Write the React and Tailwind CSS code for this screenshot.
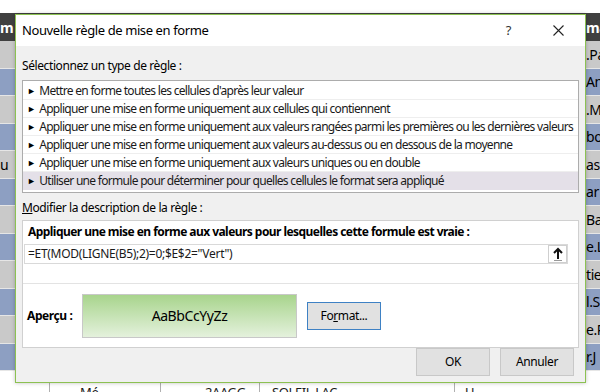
import React from 'react';

const rules = [
  "Mettre en forme toutes les cellules d'après leur valeur",
  'Appliquer une mise en forme uniquement aux cellules qui contiennent',
  'Appliquer une mise en forme uniquement aux valeurs rangées parmi les premières ou les dernières valeurs',
  'Appliquer une mise en forme uniquement aux valeurs au-dessus ou en dessous de la moyenne',
  'Appliquer une mise en forme uniquement aux valeurs uniques ou en double',
  'Utiliser une formule pour déterminer pour quelles cellules le format sera appliqué',
];

const rightLabels = ['.Pa', 'An', '.M', 'bo', 'as', 'ar', 'Ba', 'e.L', 'tie', 'l.S', 'e.P', 'r.J'];
const leftLabels = ['', '', '', '', 'u', '', '', '', '', '', '', ''];

function SheetRow({ i, left, right }) {
  const bg = i % 2 === 0 ? 'bg-[#c9c9c9]' : 'bg-[#8d9fc2]';
  return (
    <div className={`flex h-[27.5px] border-b border-[#e6e6e6] ${bg}`}>
      <div className="w-[15px] flex items-center text-[14px] text-black">{left}</div>
      <div className="flex-1" />
      <div className="w-[14px] flex items-center text-[14px] text-black overflow-hidden whitespace-nowrap">{right}</div>
    </div>
  );
}

export default function App() {
  return (
    <div className="relative w-[600px] h-[392px] overflow-hidden bg-white font-['Noto_Sans',sans-serif] text-[12px] tracking-[-0.4px] text-[#1a1a1a]">
      {/* spreadsheet behind the dialog */}
      <div className="pt-[13px]">
        <div className="flex h-[28px] bg-[#404040] text-white text-[14px] font-bold">
          <div className="w-[15px] flex items-center">m</div>
          <div className="flex-1" />
          <div className="w-[14px] flex items-center overflow-hidden">ma</div>
        </div>
        {rightLabels.map((r, i) => (
          <SheetRow key={i} i={i} left={leftLabels[i]} right={r} />
        ))}
        <div className="flex h-[22px] bg-white text-[13px]">
          <div className="w-[50px] border-r border-[#b0b0b0]" />
          <div className="w-[111px] border-r border-[#b0b0b0] pl-[30px] pt-[12px]">Mé</div>
          <div className="w-[99px] border-r border-[#b0b0b0] pl-[44px] pt-[12px]">2AAGG</div>
          <div className="w-[195px] border-r border-[#b0b0b0] pl-[12px] pt-[12px]">SOLEIL LAC</div>
          <div className="flex-1 pl-[10px] pt-[12px]">U</div>
        </div>
      </div>

      {/* dialog window */}
      <div className="absolute left-[15px] top-[14px] w-[571px] h-[369px] border border-[#8cc152] bg-[#f0f0f0] shadow-[0_0_4px_rgba(0,0,0,0.25)] flex flex-col">
        <div className="h-[31px] bg-white flex items-center pl-[6px] shrink-0">
          <span className="text-[13px] text-black">Nouvelle règle de mise en forme</span>
          <span className="ml-auto mr-[42px] text-[13px] text-[#333]">?</span>
          <svg width="11" height="11" viewBox="0 0 11 11" className="mr-[21px]">
            <path d="M0.5 0.5 L10.5 10.5 M10.5 0.5 L0.5 10.5" stroke="#222" strokeWidth="1.1" />
          </svg>
        </div>

        <div className="px-[6px] pt-[12px]">
          <div className="text-black leading-[16px]">Sélectionnez un type de règle :</div>
          <div className="mt-[6px] bg-white border border-[#acacac] h-[113px] w-[557px] pt-[1px] tracking-[-0.7px] overflow-hidden">
            {rules.map((r, i) => (
              <div
                key={i}
                className={`h-[18px] flex items-center whitespace-nowrap pl-[4px] ${i === 5 ? 'bg-[#e4e0e8]' : 'border-b border-[#eeeeee]'}`}
              >
                <span className="text-[9px] mr-[4px] text-black">►</span>
                <span>{r}</span>
              </div>
            ))}
          </div>

          <div className="mt-[7px] text-black leading-[16px]">
            <span className="underline">M</span>odifier la description de la règle :
          </div>

          <div className="mt-[4px] bg-white border border-[#d0d0d0] w-[557px] h-[128px] flex flex-col">
            <div className="pl-[5px] pt-[3px] font-bold text-black leading-[16px] tracking-[-0.55px]">
              Appliquer une mise en forme aux valeurs pour lesquelles cette formule est vraie :
            </div>
            <div className="mx-[1px] mt-[4px] h-[20px] w-[544px] border border-[#d9d9d9] flex items-center">
              <span className="pl-[3px] text-[12px] tracking-[-0.3px]">=ET(MOD(LIGNE(B5);2)=0;$E$2="Vert")</span>
              <div className="ml-auto w-[19px] h-[18px] border border-[#cfcfcf] bg-white flex items-center justify-center">
                <svg width="12" height="14" viewBox="0 0 12 14">
                  <path d="M6 2 V12 M2 6 L6 2 L10 6" stroke="#111" strokeWidth="2" fill="none" />
                  <path d="M2 13.5 H10" stroke="#999" strokeWidth="1" />
                </svg>
              </div>
            </div>
            <div className="mt-[19px] border-t border-[#e3e3e3] flex-1 flex items-center">
              <span className="pl-[4px] w-[59px] font-bold text-black">Aperçu :</span>
              <div className="w-[215px] h-[44px] border border-[#c8c8c8] bg-gradient-to-b from-[#a8d48c] to-[#e4f1dc] flex items-center justify-center text-[14px] text-black">
                AaBbCcYyZz
              </div>
              <button className="ml-[10px] w-[74px] h-[28px] border border-[#3e81c4] bg-[#e1e1e1] text-black text-[12px]">
                Fo<span className="underline">r</span>mat...
              </button>
            </div>
          </div>
        </div>

        <div className="flex justify-end gap-[10px] pr-[11px] pt-0">
          <button className="w-[74px] h-[28px] border border-[#c8c8c8] bg-[#e1e1e1] text-black text-[12px]">OK</button>
          <button className="w-[74px] h-[28px] border border-[#c8c8c8] bg-[#e1e1e1] text-black text-[12px]">Annuler</button>
        </div>
      </div>
    </div>
  );
}
